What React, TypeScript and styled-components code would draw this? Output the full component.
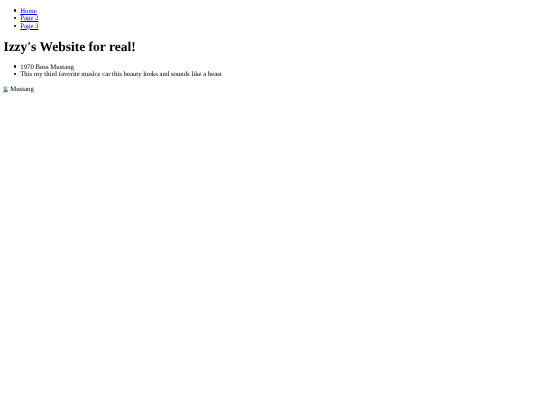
import React from "react";
import styled, { createGlobalStyle } from "styled-components";

const GlobalStyle = createGlobalStyle`
  html, body {
    background: #fff;
  }
  body {
    margin: 0 3.375px;
    padding-top: 1px;
    color: #000;
    font-family: "Liberation Serif", "Times New Roman", serif;
    font-size: 6.75px;
    line-height: 7.6px;
    text-rendering: geometricPrecision;
  }
  #root {
    filter: blur(0.35px);
  }
`;

const List = styled.ul`
  margin: 6.75px 0;
  padding-left: 16.875px;
  list-style: none;
`;

const Item = styled.li`
  position: relative;
  &::before {
    content: "";
    position: absolute;
    left: -6.7px;
    top: 1.6px;
    width: 2.4px;
    height: 2.4px;
    border-radius: 50%;
    background: #000;
  }
`;

const NavLink = styled.a`
  color: #0000ee;
  text-decoration: underline;
  text-decoration-thickness: 0.5px;
`;

const Title = styled.h1`
  margin: 8.4px 0 9.7px;
  font-size: 13.5px;
  line-height: 15.2px;
  font-weight: bold;
`;

const BrokenImage = styled.span`
  display: inline-flex;
  align-items: flex-start;
  margin-top: 0.4px;
`;

const BrokenIcon = () => (
  <svg width="6.75" height="6.75" viewBox="0 0 16 16" aria-hidden="true">
    <path d="M0.500 0.500h10l5 5v10h-15z" fill="#fff" stroke="#9aa0a6" />
    <path d="M2 2h8v7H2z" fill="#8fb6ea" />
    <path d="M1.500 14.500v-3l4-4 3 3 2-1 3 5z" fill="#3f9a3a" />
    <path d="M7 16L16 10v6z" fill="#fff" />
  </svg>
);

export default function App() {
  return (
    <>
      <GlobalStyle />
      <List>
        <Item><NavLink href="#">Home</NavLink></Item>
        <Item><NavLink href="#">Page 2</NavLink></Item>
        <Item><NavLink href="#">Page 3</NavLink></Item>
      </List>
      <Title>Izzy's Website for real!</Title>
      <List>
        <Item>1970 Boss Mustang</Item>
        <Item>This my third favorite muslce car this beauty looks and sounds like a beast</Item>
      </List>
      <BrokenImage>
        <BrokenIcon />
        Mustang
      </BrokenImage>
    </>
  );
}
